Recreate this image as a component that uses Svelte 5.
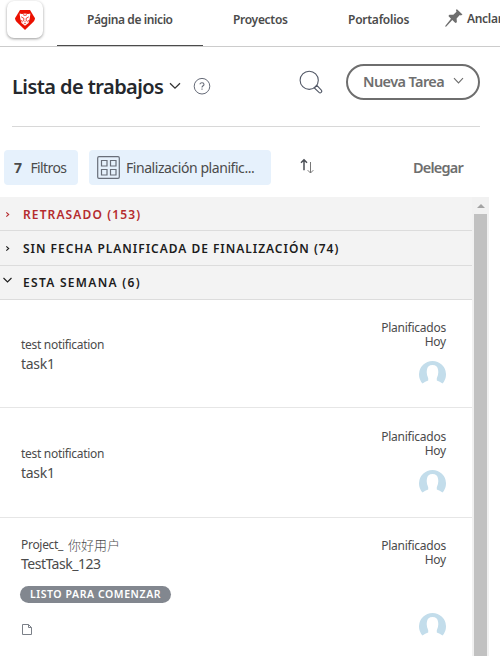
<script>
  const tabs = [
    { label: 'Página de inicio', cls: 'home' },
    { label: 'Proyectos', cls: 'projects' },
    { label: 'Portafolios', cls: 'portfolios' }
  ];
  const groups = [
    { label: 'RETRASADO (153)', cls: 'late', open: false },
    { label: 'SIN FECHA PLANIFICADA DE FINALIZACIÓN (74)', cls: 'nodate', open: false },
    { label: 'ESTA SEMANA (6)', cls: 'week', open: true }
  ];
  const tasks = [
    { project: 'test notification', name: 'task1' },
    { project: 'test notification', name: 'task1' },
    { project: 'Project_ ', cjk: '你好用户', name: 'TestTask_123', status: 'LISTO PARA COMENZAR' }
  ];
</script>

<div class="app">
  <header>
    <div class="logo">
      <svg width="20" height="20" viewBox="0 0 20 20">
        <path d="M5 0H15L20 8.2Q20 10 18.5 11.7L10 20L1.5 11.7Q0 10 0 8.2Z" fill="#eb1000" />
        <path d="M4.6 3.4L7 4.1L10 3.4L13 4.1L15.4 3.4L14.8 8.3L13.5 13L10 15.7L6.5 13L5.2 8.3Z" fill="#fff" />
        <path d="M6.2 6.8L9 8.5L8.6 11.2M13.8 6.8L11 8.5L11.4 11.2M8 4.6L10 5.5L12 4.6M6.5 10L7.4 12.2M13.5 10L12.6 12.2" fill="none" stroke="#eb1000" stroke-width=".8" />
        <path d="M9 11.5H11L10 12.5ZM8.5 13.6L10 13.2L11.5 13.6L10 14.3Z" fill="#eb1000" />
      </svg>
    </div>
    <nav>
      {#each tabs as tab}
        <div class="tab {tab.cls}"><span>{tab.label}</span></div>
      {/each}
      <div class="pin">
        <svg width="18" height="18" viewBox="0 0 18 18" fill="#6e6e6e">
          <path d="M11.7 0L17.5 5.5L15.9 6.4L14.8 6.1L11.6 9.5L11.9 13.3L10.4 14L7.3 11.1L1.3 17.5L.2 17.8L.4 16.7L6 9.8L3.4 7.1L4.4 5.7L8.3 5.8L11.5 2.7L11 1.4Z" />
        </svg>
        <span>Anclar</span>
      </div>
    </nav>
  </header>

  <section class="heading">
    <h1>Lista de trabajos</h1>
    <svg class="title-chevron" width="12" height="8" viewBox="0 0 12 8"><path d="M1 1.2L6 6.2L11 1.2" fill="none" stroke="#333" stroke-width="1.3" /></svg>
    <svg class="help" width="18" height="18" viewBox="0 0 18 18" fill="none" stroke="#666b78">
      <circle cx="9" cy="9.2" r="7.8" stroke-width="1" />
      <path d="M7 7.3C7 5.2 11 5.2 11 7.4C11 8.8 9 8.8 9 10.5M9 11.5V12.8" stroke-width="1.1" />
    </svg>
    <svg class="search" width="24" height="25" viewBox="0 0 24 25" fill="none" stroke="#525866" stroke-width="1.1">
      <circle cx="10.2" cy="10.3" r="9.1" />
      <path d="M15.3 17.9L17.8 15.4L22.3 20Q23.3 21.2 22.2 22.3Q21.1 23.3 20 22.4Z" />
    </svg>
    <button>
      <span>Nueva Tarea</span>
      <svg width="11" height="8" viewBox="0 0 11 8"><path d="M1 1.2L5.5 6L10 1.2" fill="none" stroke="#6e6e6e" stroke-width="1.1" /></svg>
    </button>
  </section>

  <section class="toolbar">
    <div class="chip filters"><b>7</b><span>Filtros</span></div>
    <div class="chip grouping">
      <svg width="23" height="23" viewBox="0 0 23 23" fill="none" stroke="#686e79" stroke-width="1.2">
        <rect x=".7" y=".7" width="21.6" height="21.6" rx="1.3" />
        <path d="M4.5 4.5h5.5v5.5h-5.5zM13.5 4.5h5.5v5.5h-5.5zM4.5 13.5h5.5v5.5h-5.5zM13.5 13.5h5.5v5.5h-5.5z" />
      </svg>
      <span>Finalización planific...</span>
    </div>
    <svg class="sort" width="15" height="16" viewBox="0 0 15 16" fill="none">
      <path d="M4 12.3V2M1 4.8L4 1.8L7 4.8" stroke="#4b4f56" stroke-width="1.5" />
      <path d="M10.5 4V15M7.7 12.2L10.5 15L13.3 12.2" stroke="#777" stroke-width="1" />
    </svg>
    <span class="delegate">Delegar</span>
  </section>

  <main>
    <div class="list">
      {#each groups as group}
        <div class="group {group.cls}">
          <svg width="11" height="10" viewBox="0 0 11 10" fill="none" stroke="currentColor" stroke-width="1.1">
            {#if group.open}<path d="M1.5 1L5.5 5L9.5 1" />{:else}<path d="M4.3 3.3L6.7 5.5L4.3 7.7" />{/if}
          </svg>
          <span>{group.label}</span>
        </div>
      {/each}
      {#each tasks as task}
        <article class:detailed={task.status}>
          <div class="info">
            <div class="project"><span>{task.project}</span>{#if task.cjk}<span class="cjk">{task.cjk}</span>{/if}</div>
            <div class="name">{task.name}</div>
            {#if task.status}
              <div class="status"><span>{task.status}</span></div>
              <svg class="doc" width="12" height="13" viewBox="0 0 12 13" fill="none" stroke="#7b8088"><path d="M1.5 1.5H7.5L10.5 4.5V11.5H1.5ZM7.5 1.5V4.5H10.5" /></svg>
            {/if}
          </div>
          <div class="due">
            <div class="plan">Planificados</div>
            <div class="today">Hoy</div>
            <svg class="avatar" width="27" height="27" viewBox="0 0 27 27">
              <path d="M3.5 22.6A13.5 13.5 0 1 1 23.5 22.6Q20.8 20.6 17.8 19.5V17.2Q19.8 13.5 19.1 9Q18.5 4 13.5 4Q8.5 4 7.9 9Q7.2 13.5 9.2 17.2V19.5Q6.2 20.6 3.5 22.6Z" fill="#c3ddeb" />
            </svg>
          </div>
        </article>
      {/each}
    </div>
    <div class="scrollbar"><div class="arrow"></div><div class="thumb"></div></div>
  </main>
</div>

<style>
  :global(body) { margin: 0; background: #fff; }
  .app { width: 500px; height: 656px; overflow: hidden; background: #fff; color: #4b4b4b; font-family: "Noto Sans", "Noto Sans CJK SC", sans-serif; white-space: nowrap; }
  .app * { box-sizing: border-box; }
  svg { display: block; flex: none; }
  header { display: flex; height: 47px; border-bottom: 1px solid #ccc; }
  .logo { width: 36px; height: 37px; margin: 1px 0 0 7px; border-radius: 7px; flex: none; display: flex; justify-content: center; padding-top: 9px; box-shadow: 0 1px 3px #0006; background: #fff; }
  nav { display: flex; margin-left: 14px; height: 46px; font-size: 12px; line-height: 18px; font-weight: 600; letter-spacing: -.3px; }
  .tab { width: 146px; padding: 11px 0 0 30px; flex: none; }
  .home { border-bottom: 1px solid #4b4b4b; letter-spacing: -.4px; }
  .projects { width: 115px; }
  .portfolios { width: 127px; letter-spacing: -.25px; }
  .pin { display: flex; gap: 4px; flex: none; padding-top: 9px; }
  .pin span { padding-top: 1px; }
  .heading { display: flex; height: 80px; margin: 0 20px 0 12px; border-bottom: 1px solid #d8d8d8; }
  h1 { width: 151px; margin: 25px 0 0; color: #25282d; font-size: 20px; line-height: 30px; font-weight: 600; letter-spacing: -.57px; }
  .title-chevron { margin: 35px 0 0 6px; }
  .help { margin: 30px 0 0 12px; }
  .search { margin: 23px 0 0 88px; }
  button { width: 134px; height: 36px; margin: 17px 0 0 23px; padding: 0 0 2px 15px; border: 2px solid #6e6e6e; border-radius: 18px; background: transparent; display: flex; align-items: center; color: #6e6e6e; font: 600 14.5px/22px "Noto Sans", sans-serif; letter-spacing: -.6px; }
  button span { width: 90px; text-align: left; }
  .toolbar { height: 70px; display: flex; padding: 23px 0 0 4px; }
  .chip { height: 35px; border-radius: 4px; background: #e6f1fc; display: flex; align-items: center; flex: none; font-size: 14px; letter-spacing: -.5px; color: #4b4b4b; }
  .filters { width: 74px; padding-left: 10px; gap: 9px; letter-spacing: -.6px; }
  .grouping { width: 182px; margin-left: 11px; padding-left: 8px; gap: 6px; letter-spacing: -.44px; }
  .sort { margin: 8px 0 0 29px; }
  .delegate { margin: 6px 0 0 98px; color: #6e6e6e; font-size: 14.5px; line-height: 22px; font-weight: 600; letter-spacing: -.8px; }
  main { height: 459px; display: flex; }
  .list { width: 472px; }
  .group { height: 35px; border-bottom: 1px solid #dcdcdc; background: #f3f3f3; color: #1c1c1c; display: flex; align-items: center; padding-left: 2px; gap: 10px; font-size: 12px; font-weight: 600; letter-spacing: .97px; }
  .late { height: 34px; color: #b52b2e; letter-spacing: 1.12px; }
  .late span { padding-top: 2px; }
  .week { height: 34px; letter-spacing: 1.3px; }
  .week svg { margin-bottom: 2px; }
  article { height: 108px; border-bottom: 1px solid #e6e6e6; display: flex; justify-content: space-between; padding: 21px 26px 0 20px; }
  article + article { height: 110px; padding-top: 22px; }
  .info { padding: 15px 0 0 1px; font-size: 12px; line-height: 18px; }
  .project { display: flex; height: 18px; letter-spacing: -.3px; white-space: pre; }
  .cjk { font-family: "Noto Sans CJK SC", sans-serif; font-size: 13px; font-weight: 300; letter-spacing: 0; padding-left: 2px; }
  .name { font-size: 14px; line-height: 19px; letter-spacing: -.3px; }
  article.detailed { height: 160px; border: 0; padding-top: 21px; }
  .detailed .info { padding-top: 0; margin-top: -3px; }
  .detailed .name { letter-spacing: -.5px; }
  .due { text-align: right; font-size: 12px; line-height: 14px; letter-spacing: -.24px; display: flex; flex-direction: column; align-items: flex-end; }
  .avatar { margin-top: 12px; }
  .detailed .avatar { margin-top: 46px; }
  .status { margin: 13px 0 0 -1px; width: 151px; height: 17px; border-radius: 9px; background: #82878f; color: #fff; text-align: center; font-size: 10.5px; line-height: 17px; font-weight: 600; letter-spacing: .58px; }
  .doc { margin-top: 20px; }
  .scrollbar { width: 17px; background: #f1f1f1; padding: 7px 2px 0; }
  .arrow { width: 0; height: 0; margin-left: 3px; border: 4px solid transparent; border-top: 0; border-bottom: 4px solid #a3a3a3; }
  .thumb { margin-top: 6px; height: 442px; background: #c1c1c1; }
</style>
